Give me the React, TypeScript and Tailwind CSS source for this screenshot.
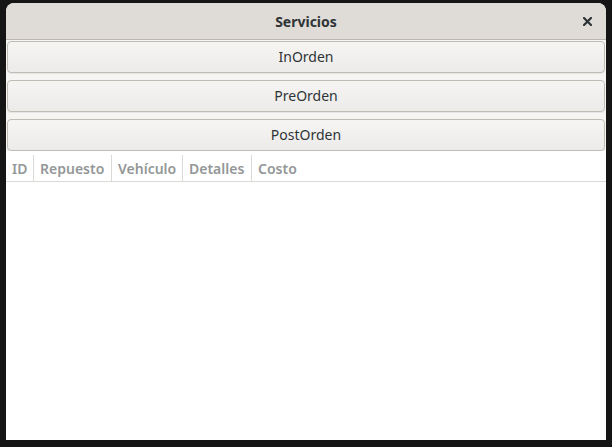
import React from "react";

const columns = [
  { label: "ID", w: "w-[28px]" },
  { label: "Repuesto", w: "w-[78px]" },
  { label: "Vehículo", w: "w-[71px]" },
  { label: "Detalles", w: "w-[69px]" },
  { label: "Costo", w: "flex-1" },
];

const orders = ["InOrden", "PreOrden", "PostOrden"];

export default function App() {
  return (
    <div
      className="w-[612px] h-[447px] bg-[#151515] pt-[3px] px-[6px] overflow-hidden"
      style={{ fontFamily: '"Noto Sans", "DejaVu Sans", sans-serif' }}
    >
      <div className="w-[600px] h-[437px] bg-white rounded-t-[8px] flex flex-col overflow-hidden">
        {/* title bar */}
        <div className="relative h-[37px] shrink-0 bg-[#dfdbd7] border-b border-[#bcb6af] rounded-t-[8px] flex items-center justify-center">
          <span className="text-[14px] font-bold text-[#2e3436]">Servicios</span>
          <svg
            className="absolute right-[14px] top-[14px]"
            width="9"
            height="9"
            viewBox="0 0 9 9"
          >
            <path
              d="M1 1 L8 8 M8 1 L1 8"
              stroke="#2e3436"
              strokeWidth="2.2"
              strokeLinecap="square"
            />
          </svg>
        </div>

        {/* traversal buttons */}
        <div className="flex flex-col gap-[7px] pt-[1px] px-[1px] bg-[#f6f5f4]">
          {orders.map((o) => (
            <button
              key={o}
              className="h-[32px] w-full rounded-[4px] border border-[#c0bbb5] bg-gradient-to-b from-[#f6f5f4] to-[#edebe9] text-[14px] leading-[30px] pb-[1px] text-[#2e3436] shadow-[0_1px_0_rgba(0,0,0,0.06)]"
            >
              {o}
            </button>
          ))}
        </div>

        {/* table header */}
        <div className="flex h-[31px] pt-[4px] border-b border-[#dcd8d4] bg-white">
          {columns.map((c, i) => (
            <div
              key={c.label}
              className={`${c.w} flex items-center pl-[6px] text-[14px] font-semibold text-[#949797] ${
                i < columns.length - 1 ? "border-r border-[#dcd8d4]" : ""
              }`}
            >
              {c.label}
            </div>
          ))}
        </div>

        <div className="flex-1 bg-white" />
      </div>
    </div>
  );
}
